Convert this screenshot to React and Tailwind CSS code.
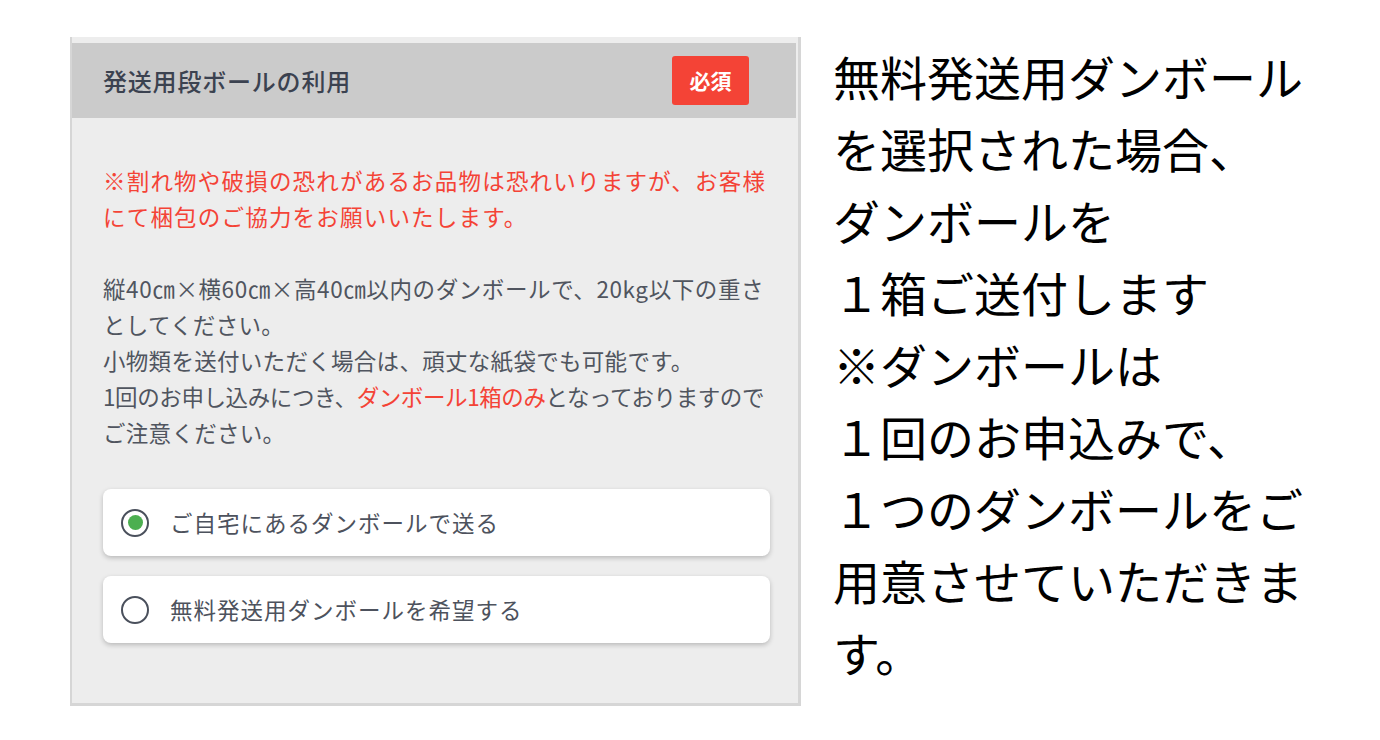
const RadioCard = ({ label, checked }) => (
  <div className="flex h-[67px] items-center gap-[21px] rounded-[8px] bg-white pl-[18px] shadow-[0_2px_5px_rgba(0,0,0,0.22)]">
    <span className="flex h-[28px] w-[28px] items-center justify-center rounded-full border-2 border-[#4a505c]">
      {checked && <span className="h-[15px] w-[15px] rounded-full bg-[#4caf50]" />}
    </span>
    <span className="text-[22.5px] leading-none tracking-[1px] text-[#4d525d]">{label}</span>
  </div>
)

const NoteLines = [
  '無料発送用ダンボール',
  'を選択された場合、',
  'ダンボールを',
  '１箱ご送付します',
  '※ダンボールは',
  '１回のお申込みで、',
  '１つのダンボールをご',
  '用意させていただきま',
  'す。',
]

export default function App() {
  return (
    <div
      className="flex min-h-[740px] w-[1380px] bg-white pl-[70px] pt-[37px]"
      style={{ fontFamily: '"Noto Sans CJK JP", "Noto Sans", sans-serif' }}
    >
      {/* left: form panel */}
      <div className="h-[669px] w-[731px] border-b-[3px] border-l-2 border-r-[3px] border-[#d6d6d6] bg-[#ededed] pr-[2px] pt-[6px]">
        <div className="flex h-[75px] items-center justify-between bg-[#cbcbcb] pl-[31px] pr-[47px]">
          <h2 className="text-[24px] font-medium tracking-[0.8px] text-[#3b4250]">発送用段ボールの利用</h2>
          <span className="flex h-[49px] w-[77px] items-center justify-center rounded-[3px] bg-[#f44336] text-[21px] font-bold text-white">
            必須
          </span>
        </div>

        <div className="pl-[31px] pr-[10px] pt-[44px]">
          <p className="whitespace-nowrap text-[22.5px] leading-[36px] tracking-[0.3px] text-[#50555f]">
            <span className="tracking-[1.2px] text-[#f44336]">
              ※割れ物や破損の恐れがあるお品物は恐れいりますが、お客様
              <br />
              にて梱包のご協力をお願いいたします。
            </span>
            <br />
            <br />
            <span className="tracking-[0.6px]">縦40㎝×横60㎝×高40㎝以内のダンボールで、20kg以下の重さ</span>
            <br />
            としてください。
            <br />
            小物類を送付いただく場合は、頑丈な紙袋でも可能です。
            <br />
            <span className="tracking-[-0.4px]">
              1回のお申し込みにつき、<span className="text-[#f44336]">ダンボール1箱のみ</span>となっておりますので
            </span>
            <br />
            ご注意ください。
          </p>

          <div className="mr-[16px] mt-[39px] flex flex-col gap-[20px]">
            <RadioCard label="ご自宅にあるダンボールで送る" checked />
            <RadioCard label="無料発送用ダンボールを希望する" />
          </div>
        </div>
      </div>

      {/* right: explanation */}
      <div className="ml-[32px] pt-[3px] text-[47px] leading-[72px] text-black">
        {NoteLines.map((line) => (
          <div key={line} className="whitespace-nowrap">{line}</div>
        ))}
      </div>
    </div>
  )
}
